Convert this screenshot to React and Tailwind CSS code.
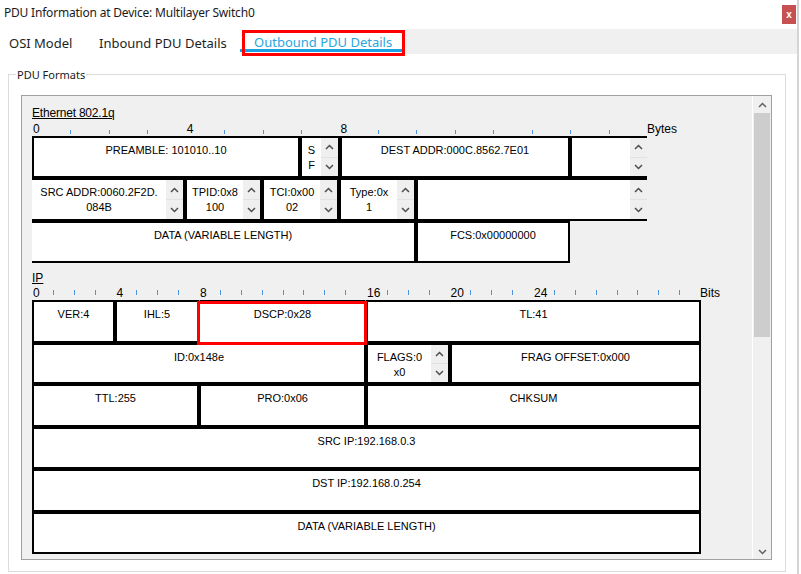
import React from "react";

function Chevron({ dir = "up", color = "#4d4d4d" }) {
  return (
    <svg width="9" height="6" viewBox="0 0 9 6" className="block">
      <path
        d={dir === "up" ? "M1 5 L4.5 1.5 L8 5" : "M1 1 L4.5 4.5 L8 1"}
        fill="none"
        stroke={color}
        strokeWidth="1.5"
      />
    </svg>
  );
}

function Spinner() {
  return (
    <div className="flex w-[17px] shrink-0 flex-col bg-[#efefef]">
      <div className="flex flex-1 items-center justify-center border-b border-[#e2e2e2]">
        <Chevron dir="up" />
      </div>
      <div className="flex flex-1 items-center justify-center">
        <Chevron dir="down" />
      </div>
    </div>
  );
}

function Cell({ w, children, spin, cls = "", overlay }) {
  return (
    <div className={`relative flex h-full shrink-0 border-2 border-black bg-white ${w} ${cls}`}>
      <div className="flex-1 pt-[5px] text-center text-[11px] leading-[15px] text-black">
        {children}
      </div>
      {spin && <Spinner />}
      {overlay && (
        <div className="absolute -top-[1px] -right-[3px] -bottom-[4px] -left-[4px] z-10 border-[3px] border-[#ff0000]" />
      )}
    </div>
  );
}

function Ruler({ units, unitWidth, labels, end, tickH, tickMb, h }) {
  const items = [];
  for (let i = 0; i < units; i++) {
    items.push(
      <div key={i} className="flex h-full shrink-0 items-end" style={{ width: unitWidth }}>
        {labels[i] !== undefined ? (
          <span className="pl-[1px] text-[12px] leading-[14px] text-black">{labels[i]}</span>
        ) : (
          <div className={`w-[1px] bg-[#4f93d8] ${tickH} ${tickMb}`} />
        )}
      </div>
    );
  }
  return (
    <div className={`flex items-end ${h}`}>
      {items}
      <span className="text-[12px] leading-[14px] text-black">{end}</span>
    </div>
  );
}

export default function App() {
  const ui = "font-['Noto_Sans',sans-serif]";
  return (
    <div className="flex h-[574px] w-[801px] overflow-hidden bg-white font-['Liberation_Sans',Arial,sans-serif]">
      <div className="flex w-[797px] shrink-0 flex-col">
        {/* title bar */}
        <div className="flex h-[29px] items-start justify-between">
          <div className={`pl-[4px] pt-[5px] text-[12px] leading-[16px] tracking-[-0.2px] text-[#1a1a1a] ${ui}`}>
            PDU Information at Device: Multilayer Switch0
          </div>
          <div className="mr-[1px] mt-[5px] flex h-[19px] w-[14px] items-center justify-center bg-[#c75050] text-[10px] font-bold leading-none text-white">
            x
          </div>
        </div>

        {/* tabs */}
        <div className={`flex h-[25px] text-[13px] leading-[16px] ${ui}`}>
          <div className="w-[86px] pl-[9px] pt-[6px] text-[#1e1e1e]">OSI Model</div>
          <div className="w-[154px] pl-[13px] pt-[6px] text-[#1e1e1e]">Inbound PDU Details</div>
          <div className="relative flex w-[165px] flex-col">
            <div className="h-[20px] pl-[14px] pt-[5px] text-[#2ba5dd]">Outbound PDU Details</div>
            <div className="h-[3px] bg-[#1ba1e2]" />
            <div className="absolute top-[1px] right-0 -bottom-[2px] left-[2px] border-[3px] border-[#ff0000]" />
          </div>
          <div className="flex-1 bg-[#f0f0f0]" />
        </div>

        {/* group box */}
        <div className="relative ml-[8px] mt-[20px] h-[498px] w-[778px] border border-[#dcdcdc]">
          <div className={`absolute -top-[8px] left-[7px] bg-white px-[1px] text-[11px] leading-[16px] text-[#1a1a1a] ${ui}`}>
            PDU Formats
          </div>

          {/* inner panel */}
          <div className="ml-[12px] mt-[20px] flex h-[465px] w-[751px] overflow-hidden border border-[#a0a0a0] bg-[#f0f0f0]">
            <div className="flex w-[730px] shrink-0 flex-col pl-[10px] pt-[10px]">
              {/* Ethernet */}
              <div className="h-[14px] text-[12px] leading-[14px] tracking-[-0.2px] text-black underline">Ethernet 802.1q</div>
              <Ruler
                units={16}
                unitWidth={38.4375}
                labels={{ 0: "0", 4: "4", 8: "8" }}
                end="Bytes"
                tickH="h-[4px]"
                tickMb="mb-[2px]"
                h="h-[16px]"
              />
              <div className="flex h-[42px]">
                <Cell w="w-[268px]">PREAMBLE: 101010..10</Cell>
                <Cell w="w-[40px]" spin>
                  S<br />F
                </Cell>
                <Cell w="w-[230px]">DEST ADDR:000C.8562.7E01</Cell>
                <Cell w="w-[77px]" spin cls="border-r-0" />
              </div>
              <div className="flex h-[43px]">
                <Cell w="w-[153px]" spin cls="border-l-0">
                  SRC ADDR:0060.2F2D.<br />084B
                </Cell>
                <Cell w="w-[77px]" spin>
                  TPID:0x8<br />100
                </Cell>
                <Cell w="w-[77px]" spin>
                  TCI:0x00<br />02
                </Cell>
                <Cell w="w-[77px]" spin>
                  Type:0x<br />1
                </Cell>
                <Cell w="w-[231px]" spin cls="border-r-0" />
              </div>
              <div className="flex h-[42px]">
                <Cell w="w-[384px]" cls="border-l-0">DATA (VARIABLE LENGTH)</Cell>
                <Cell w="w-[154px]">FCS:0x00000000</Cell>
              </div>

              {/* IP */}
              <div className="mt-[8px] h-[14px] text-[12px] leading-[14px] text-black underline">IP</div>
              <Ruler
                units={32}
                unitWidth={20.875}
                labels={{ 0: "0", 4: "4", 8: "8", 16: "16", 20: "20", 24: "24" }}
                end="Bits"
                tickH="h-[5px]"
                tickMb="mb-[5px]"
                h="h-[15px]"
              />
              <div className="flex h-[43px]">
                <Cell w="w-[83px]">VER:4</Cell>
                <Cell w="w-[84px]">IHL:5</Cell>
                <Cell w="w-[167px]" cls="border-x-transparent border-b-transparent" overlay>
                  DSCP:0x28
                </Cell>
                <Cell w="w-[335px]">TL:41</Cell>
              </div>
              <div className="flex h-[41px]">
                <Cell w="w-[334px]">ID:0x148e</Cell>
                <Cell w="w-[84px]" spin>
                  FLAGS:0<br />x0
                </Cell>
                <Cell w="w-[251px]">FRAG OFFSET:0x000</Cell>
              </div>
              <div className="flex h-[43px]">
                <Cell w="w-[167px]">TTL:255</Cell>
                <Cell w="w-[167px]">PRO:0x06</Cell>
                <Cell w="w-[335px]">CHKSUM</Cell>
              </div>
              <div className="flex h-[42px]">
                <Cell w="w-[669px]">SRC IP:192.168.0.3</Cell>
              </div>
              <div className="flex h-[43px]">
                <Cell w="w-[669px]">DST IP:192.168.0.254</Cell>
              </div>
              <div className="flex h-[42px]">
                <Cell w="w-[669px]">DATA (VARIABLE LENGTH)</Cell>
              </div>
            </div>

            {/* scrollbar */}
            <div className="flex w-[19px] shrink-0 flex-col border-l border-white">
              <div className="flex h-[17px] items-center justify-center">
                <Chevron dir="up" color="#606060" />
              </div>
              <div className="mx-[1px] h-[224px] bg-[#cdcdcd]" />
              <div className="flex-1" />
              <div className="flex h-[17px] items-center justify-center pt-[3px]">
                <Chevron dir="down" color="#606060" />
              </div>
            </div>
          </div>
        </div>
      </div>
      <div className="w-[2px] shrink-0 bg-[#d4d4d4]" />
      <div className="flex-1 bg-white" />
    </div>
  );
}
